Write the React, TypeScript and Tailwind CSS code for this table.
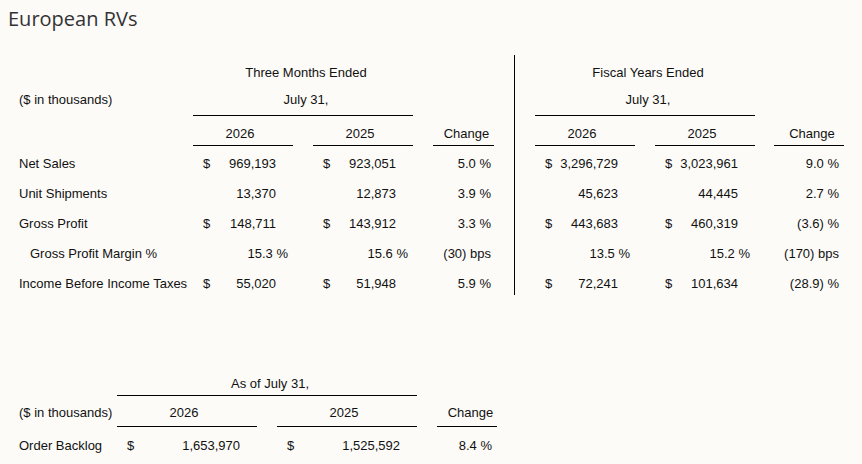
import React from "react"

type Cell =
  | { kind: "money"; value: string }
  | { kind: "num"; value: string }
  | { kind: "pct"; value: string }
  | { kind: "chg"; value: string }

interface RowData {
  label: string
  indent?: boolean
  left: [Cell, Cell, Cell]
  right: [Cell, Cell, Cell]
}

const m = (value: string): Cell => ({ kind: "money", value })
const n = (value: string): Cell => ({ kind: "num", value })
const p = (value: string): Cell => ({ kind: "pct", value })
const c = (value: string): Cell => ({ kind: "chg", value })

const rows: RowData[] = [
  {
    label: "Net Sales",
    left: [m("969,193"), m("923,051"), c("5.0 %")],
    right: [m("3,296,729"), m("3,023,961"), c("9.0 %")],
  },
  {
    label: "Unit Shipments",
    left: [n("13,370"), n("12,873"), c("3.9 %")],
    right: [n("45,623"), n("44,445"), c("2.7 %")],
  },
  {
    label: "Gross Profit",
    left: [m("148,711"), m("143,912"), c("3.3 %")],
    right: [m("443,683"), m("460,319"), c("(3.6) %")],
  },
  {
    label: "Gross Profit Margin %",
    indent: true,
    left: [p("15.3 %"), p("15.6 %"), c("(30) bps")],
    right: [p("13.5 %"), p("15.2 %"), c("(170) bps")],
  },
  {
    label: "Income Before Income Taxes",
    left: [m("55,020"), m("51,948"), c("5.9 %")],
    right: [m("72,241"), m("101,634"), c("(28.9) %")],
  },
]

function ValueCell({ cell, width, chgPad }: { cell: Cell; width: string; chgPad?: string }) {
  if (cell.kind === "money") {
    return (
      <div className={`${width} flex justify-between pl-[10px] pr-[17px]`}>
        <span>$</span>
        <span>{cell.value}</span>
      </div>
    )
  }
  if (cell.kind === "num") {
    return <div className={`${width} flex justify-end pr-[17px]`}>{cell.value}</div>
  }
  if (cell.kind === "pct") {
    return <div className={`${width} flex justify-end pr-[5px]`}>{cell.value}</div>
  }
  return <div className={`${width} flex justify-end ${chgPad ?? "pr-[5px]"}`}>{cell.value}</div>
}

export default function App() {
  return (
    <div
      className="w-[862px] h-[464px] overflow-hidden bg-[#fcfbf8] text-[#111] text-[13px] leading-[20px]"
      style={{ fontFamily: '"Liberation Sans", Arial, sans-serif' }}
    >
      {/* title */}
      <div
        className="pt-[5px] pl-[8px] text-[20px] leading-[28px] text-[#333]"
        style={{ fontFamily: '"Open Sans", "Noto Sans", sans-serif' }}
      >
        European RVs
      </div>

      {/* three months / fiscal years */}
      <div className="mt-[22px] flex pl-[19px]">
        {/* left block */}
        <div className="pt-[2px]">
          <div className="flex h-[30px] pt-[6px]">
            <div className="w-[174px]" />
            <div className="w-[220px] text-center pl-[6px]">Three Months Ended</div>
          </div>
          <div className="flex h-[29px]">
            <div className="w-[174px] pt-[3px]">($ in thousands)</div>
            <div className="w-[220px] h-[29px] border-b border-black pt-[3px] text-center pl-[6px]">July 31,</div>
          </div>
          <div className="flex h-[30px]">
            <div className="w-[174px]" />
            <div className="w-[100px] h-[30px] border-b border-black pt-[8px] text-center pr-[6px]">2026</div>
            <div className="w-[100px] ml-[20px] h-[30px] border-b border-black pt-[8px] text-center pr-[6px]">2025</div>
            <div className="w-[61px] ml-[20px] h-[30px] border-b border-black pt-[8px] text-center pl-[6px]">Change</div>
          </div>
          <div className="mt-[3px]">
            {rows.map((r) => (
              <div key={r.label} className="flex h-[30px] items-center">
                <div className={`w-[174px] whitespace-nowrap ${r.indent ? "pl-[11px]" : ""}`}>{r.label}</div>
                <ValueCell cell={r.left[0]} width="w-[100px]" />
                <div className="ml-[20px]">
                  <ValueCell cell={r.left[1]} width="w-[100px]" />
                </div>
                <div className="ml-[20px]">
                  <ValueCell cell={r.left[2]} width="w-[61px]" chgPad="pr-[3px]" />
                </div>
              </div>
            ))}
          </div>
        </div>

        <div className="ml-[20px] w-px h-[240px] bg-black" />

        {/* right block */}
        <div className="ml-[20px] pt-[2px]">
          <div className="flex h-[30px] pt-[6px]">
            <div className="w-[220px] text-center pl-[6px]">Fiscal Years Ended</div>
          </div>
          <div className="flex h-[29px]">
            <div className="w-[220px] h-[29px] border-b border-black pt-[3px] text-center pl-[6px]">July 31,</div>
          </div>
          <div className="flex h-[30px]">
            <div className="w-[100px] h-[30px] border-b border-black pt-[8px] text-center pr-[6px]">2026</div>
            <div className="w-[100px] ml-[20px] h-[30px] border-b border-black pt-[8px] text-center pr-[6px]">2025</div>
            <div className="w-[70px] ml-[19px] h-[30px] border-b border-black pt-[8px] text-center pl-[6px]">Change</div>
          </div>
          <div className="mt-[3px]">
            {rows.map((r) => (
              <div key={r.label} className="flex h-[30px] items-center">
                <ValueCell cell={r.right[0]} width="w-[100px]" />
                <div className="ml-[20px]">
                  <ValueCell cell={r.right[1]} width="w-[100px]" />
                </div>
                <div className="ml-[19px]">
                  <ValueCell cell={r.right[2]} width="w-[70px]" />
                </div>
              </div>
            ))}
          </div>
        </div>
      </div>

      {/* order backlog */}
      <div className="mt-[70px] pl-[19px]">
        <div className="flex h-[27px]">
          <div className="w-[98px]" />
          <div className="w-[300px] h-[27px] border-b border-black pt-[5px] text-center pl-[6px]">As of July 31,</div>
        </div>
        <div className="flex h-[31px]">
          <div className="w-[98px] pt-[7px] whitespace-nowrap">($ in thousands)</div>
          <div className="w-[140px] h-[31px] border-b border-black pt-[7px] text-center pr-[6px]">2026</div>
          <div className="w-[140px] ml-[20px] h-[31px] border-b border-black pt-[7px] text-center pr-[6px]">2025</div>
          <div className="w-[60px] ml-[20px] h-[31px] border-b border-black pt-[7px] text-center pl-[7px]">Change</div>
        </div>
        <div className="flex h-[35px] items-center pt-[2px]">
          <div className="w-[98px] whitespace-nowrap">Order Backlog</div>
          <ValueCell cell={m("1,653,970")} width="w-[140px]" />
          <div className="ml-[20px]">
            <ValueCell cell={m("1,525,592")} width="w-[140px]" />
          </div>
          <div className="ml-[20px]">
            <ValueCell cell={c("8.4 %")} width="w-[60px]" />
          </div>
        </div>
      </div>
    </div>
  )
}
